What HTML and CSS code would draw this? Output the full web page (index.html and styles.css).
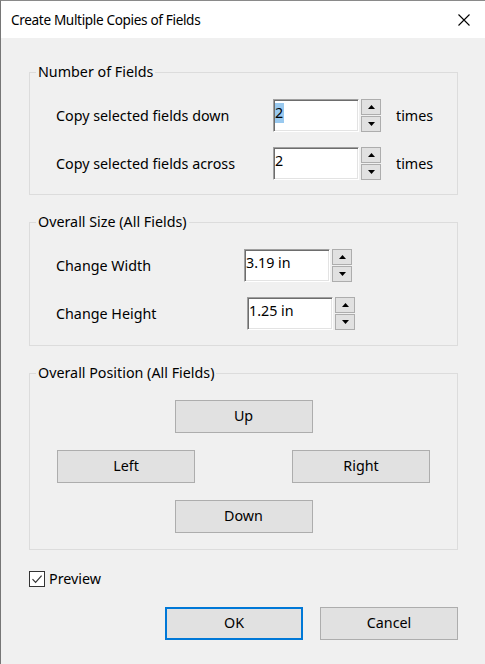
FILE: index.html
```html
<!DOCTYPE html>
<html lang="en">
<head>
<meta charset="utf-8">
<title>Create Multiple Copies of Fields</title>
<link rel="stylesheet" href="styles.css">
</head>
<body>
<div class="window">
  <div class="titlebar">
    <span class="title">Create Multiple Copies of Fields</span>
    <span class="close" aria-label="Close">
      <svg width="12" height="12" viewBox="0 0 12 12"><path d="M0.5 0.5L11.5 11.5M11.5 0.5L0.5 11.5" stroke="#000" stroke-width="1.1" fill="none"/></svg>
    </span>
  </div>
  <div class="content">
    <fieldset class="group">
      <legend>Number of Fields</legend>
      <div class="rows">
        <div class="row">
          <span class="lbl lbl-copy">Copy selected fields down</span>
          <div class="spin">
            <div class="field"><span class="sel">2</span></div>
            <div class="arrows">
              <span class="arr"><svg width="7" height="4" viewBox="0 0 7 4"><path d="M0 4H7L3.5 0Z"/></svg></span>
              <span class="arr"><svg width="7" height="4" viewBox="0 0 7 4"><path d="M0 0H7L3.5 4Z"/></svg></span>
            </div>
          </div>
          <span class="unit">times</span>
        </div>
        <div class="row">
          <span class="lbl lbl-copy">Copy selected fields across</span>
          <div class="spin">
            <div class="field">2</div>
            <div class="arrows">
              <span class="arr"><svg width="7" height="4" viewBox="0 0 7 4"><path d="M0 4H7L3.5 0Z"/></svg></span>
              <span class="arr"><svg width="7" height="4" viewBox="0 0 7 4"><path d="M0 0H7L3.5 4Z"/></svg></span>
            </div>
          </div>
          <span class="unit">times</span>
        </div>
      </div>
    </fieldset>

    <fieldset class="group group-size">
      <legend>Overall Size (All Fields)</legend>
      <div class="rows">
        <div class="row">
          <span class="lbl lbl-width">Change Width</span>
          <div class="spin">
            <div class="field">3.19 in</div>
            <div class="arrows">
              <span class="arr"><svg width="7" height="4" viewBox="0 0 7 4"><path d="M0 4H7L3.5 0Z"/></svg></span>
              <span class="arr"><svg width="7" height="4" viewBox="0 0 7 4"><path d="M0 0H7L3.5 4Z"/></svg></span>
            </div>
          </div>
        </div>
        <div class="row">
          <span class="lbl lbl-height">Change Height</span>
          <div class="spin">
            <div class="field">1.25 in</div>
            <div class="arrows">
              <span class="arr"><svg width="7" height="4" viewBox="0 0 7 4"><path d="M0 4H7L3.5 0Z"/></svg></span>
              <span class="arr"><svg width="7" height="4" viewBox="0 0 7 4"><path d="M0 0H7L3.5 4Z"/></svg></span>
            </div>
          </div>
        </div>
      </div>
    </fieldset>

    <fieldset class="group group-pos">
      <legend>Overall Position (All Fields)</legend>
      <div class="pad">
        <span class="btn pos-up">Up</span>
        <span class="btn pos-left">Left</span>
        <span class="btn pos-right">Right</span>
        <span class="btn pos-down">Down</span>
      </div>
    </fieldset>

    <div class="check-row">
      <span class="checkbox">
        <svg width="14" height="14" viewBox="0 0 14 14"><path d="M2.5 7.2L5.6 10.3L11.6 3.6" stroke="#333" stroke-width="1.2" fill="none"/></svg>
      </span>
      <span class="check-label">Preview</span>
    </div>

    <div class="actions">
      <span class="btn btn-default">OK</span>
      <span class="btn">Cancel</span>
    </div>
  </div>
</div>
</body>
</html>
```

FILE: styles.css
```css
* {
  box-sizing: border-box;
}

html, body {
  margin: 0;
  padding: 0;
  background: #f0f0f0;
}

body {
  font-family: "Noto Sans", "Open Sans", sans-serif;
  font-size: 14.3px;
  color: #000;
}

.window {
  width: 485px;
  height: 664px;
  background: #f0f0f0;
  border-top: 1px solid #8a8a8a;
  border-left: 1px solid #767676;
  display: flex;
  flex-direction: column;
}

.titlebar {
  height: 37px;
  background: #fff;
  display: flex;
  align-items: center;
  justify-content: space-between;
  padding: 0 15px 0 10px;
}

.title {
  font-size: 13.6px;
  letter-spacing: -0.35px;
  line-height: 20px;
}

.close {
  display: flex;
  width: 12px;
  height: 12px;
}

.content {
  padding: 24px 27px 0 28px;
  display: flex;
  flex-direction: column;
}

.group {
  margin: 0 0 17px 0;
  padding: 17px 0 14px 26px;
  border: 1px solid #dcdcdc;
  min-width: 0;
}

.group legend {
  margin-left: -20px;
  padding: 0 2px;
  line-height: 20px;
  height: 20px;
}

.group-size {
  padding-bottom: 15px;
}

.group-pos {
  padding: 17px 27px 16px 26px;
}

.rows {
  display: flex;
  flex-direction: column;
  gap: 15px;
}

.row {
  display: flex;
  align-items: center;
  height: 33px;
}

.lbl {
  flex: none;
  line-height: 20px;
}

.lbl-copy {
  width: 217px;
}

.lbl-width {
  width: 188px;
}

.lbl-height {
  width: 191px;
}

.spin {
  display: flex;
  gap: 2px;
  height: 33px;
}

.field {
  width: 86px;
  height: 33px;
  background: #fff;
  border: 1px solid;
  border-color: #a0a0a0 #fff #fff #a0a0a0;
  box-shadow: inset 1px 1px 0 #6d6d6d, inset -1px -1px 0 #e3e3e3;
  padding: 3px 2px 0 1px;
  line-height: 20px;
  white-space: nowrap;
}

.sel {
  background: #99c9ef;
  display: inline-block;
  line-height: 20px;
  padding: 0 1px 0 0;
}

.arrows {
  display: flex;
  flex-direction: column;
  gap: 1px;
  width: 20px;
}

.arr {
  height: 16px;
  background: #e1e1e1;
  border: 1px solid #adadad;
  display: flex;
  align-items: center;
  justify-content: center;
}

.arr svg path {
  fill: #000;
}

.unit {
  margin-left: 15px;
  line-height: 20px;
}

.pad {
  display: grid;
  grid-template-columns: 138px 1fr 138px;
  grid-template-rows: 33px 33px 33px;
  row-gap: 17px;
  padding-left: 1px;
}

.btn {
  display: flex;
  align-items: center;
  justify-content: center;
  width: 138px;
  height: 33px;
  background: #e1e1e1;
  border: 1px solid #adadad;
  line-height: 20px;
  padding-bottom: 1px;
}

.pos-up {
  grid-column: 1 / 4;
  grid-row: 1;
  justify-self: center;
}

.pos-left {
  grid-column: 1;
  grid-row: 2;
}

.pos-right {
  grid-column: 3;
  grid-row: 2;
}

.pos-down {
  grid-column: 1 / 4;
  grid-row: 3;
  justify-self: center;
}

.check-row {
  display: flex;
  align-items: center;
  gap: 4px;
  margin-top: 4px;
  height: 16px;
}

.checkbox {
  width: 16px;
  height: 16px;
  border: 1px solid #333;
  background: #fff;
  display: flex;
  align-items: center;
  justify-content: center;
}

.check-label {
  line-height: 20px;
}

.actions {
  margin-top: 20px;
  display: flex;
  justify-content: flex-end;
  gap: 17px;
}

.btn-default {
  border: 2px solid #0078d7;
}
```
